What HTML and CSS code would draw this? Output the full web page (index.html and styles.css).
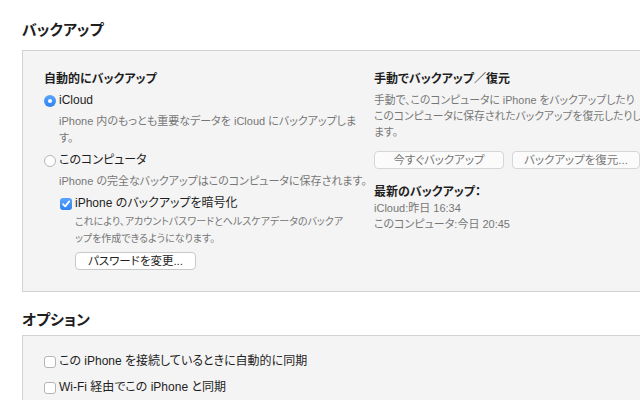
FILE: index.html
```html
<!DOCTYPE html>
<html>
  <head>
    <meta charset="UTF-8" />
    <title>バックアップ</title>
    <link rel="stylesheet" href="styles.css">
  </head>

  <body>
    <h2 class="section-title">バックアップ</h2>
    <div class="panel backup-panel">
      <div class="col col-left">
        <div class="label-bold">自動的にバックアップ</div>
        <div class="option-row">
          <span class="radio checked"></span>
          <span>iCloud</span>
        </div>
        <p class="desc">iPhone 内のもっとも重要なデータを iCloud にバックアップしま<br />す。</p>
        <div class="option-row row-computer">
          <span class="radio"></span>
          <span>このコンピュータ</span>
        </div>
        <p class="desc desc-computer">iPhone の完全なバックアップはこのコンピュータに保存されます。</p>
        <div class="sub">
          <div class="option-row row-encrypt">
            <span class="checkbox checked">
              <svg viewBox="0 0 12 12" width="12" height="12">
                <path d="M3 6.2 L5.2 8.4 L9.2 3.4" fill="none" stroke="#fff" stroke-width="1.7" stroke-linecap="round" stroke-linejoin="round" />
              </svg>
            </span>
            <span>iPhone のバックアップを暗号化</span>
          </div>
          <p class="small">これにより、アカウントパスワードとヘルスケアデータのバックア<br />ップを作成できるようになります。</p>
          <button class="btn btn-password">パスワードを変更...</button>
        </div>
      </div>

      <div class="col col-right">
        <div class="label-bold">手動でバックアップ／復元</div>
        <p class="desc desc-manual">手動で、このコンピュータに iPhone をバックアップしたり<br />このコンピュータに保存されたバックアップを復元したりし<br />ます。</p>
        <div class="btn-row">
          <button class="btn btn-dim btn-now">今すぐバックアップ</button>
          <button class="btn btn-dim btn-restore">バックアップを復元...</button>
        </div>
        <div class="label-bold latest">最新のバックアップ：</div>
        <div class="desc latest-line">iCloud:昨日 16:34</div>
        <div class="desc latest-line">このコンピュータ:今日 20:45</div>
      </div>
    </div>

    <h2 class="section-title options-title">オプション</h2>
    <div class="panel options-panel">
      <div class="option-row">
        <span class="checkbox"></span>
        <span>この iPhone を接続しているときに自動的に同期</span>
      </div>
      <div class="option-row option-wifi">
        <span class="checkbox"></span>
        <span>Wi-Fi 経由でこの iPhone と同期</span>
      </div>
    </div>
  </body>
</html>
```

FILE: styles.css
```css
/* 全体 */
body {
  margin: 0;
  background-color: #fff;
  color: #222;
  font-family: "Liberation Sans", "Noto Sans CJK JP", sans-serif;
  font-size: 11px;
  font-feature-settings: "palt";
  white-space: nowrap;
  overflow: hidden;
}

p {
  margin: 0;
}

/* 見出し */
.section-title {
  margin: 0 0 0 22px;
  padding-top: 21px;
  height: 29px;
  font-size: 15px;
  line-height: 18px;
  font-weight: bold;
  color: #1e1e1e;
}

.options-title {
  padding-top: 19px;
  height: 24px;
}

/* パネル */
.panel {
  margin-left: 22px;
  background-color: #f4f4f4;
  border: 1px solid #d2d2d2;
  border-right: none;
}

.backup-panel {
  display: flex;
  height: 240px;
  padding-left: 21px;
}

.col-left {
  flex: none;
  width: 330px;
}

.col-right {
  flex: 1;
  min-width: 0;
}

.label-bold {
  font-weight: bold;
  font-size: 12px;
  line-height: 17px;
  margin-top: 20px;
  color: #1e1e1e;
}

.option-row {
  display: flex;
  align-items: center;
  height: 17px;
  line-height: 17px;
  font-size: 12px;
  color: #1e1e1e;
}

.option-row .radio,
.option-row .checkbox {
  margin-right: 3px;
}

.col-left .option-row {
  margin-top: 4px;
}

.desc {
  color: #777;
  font-size: 11px;
  line-height: 17px;
  padding-left: 15px;
  margin-top: 4px;
}

.col-left .row-computer {
  margin-top: 5px;
}

.desc-computer {
  margin-top: 4px;
}

.sub {
  padding-left: 16px;
}

.col-left .row-encrypt {
  margin-top: 5px;
}

.small {
  color: #777;
  font-size: 10px;
  line-height: 17px;
  padding-left: 15px;
  margin-top: 1px;
}

/* ラジオとチェックボックス */
.radio {
  display: inline-block;
  box-sizing: border-box;
  width: 12px;
  height: 12px;
  border-radius: 50%;
  border: 1px solid #b5b5b5;
  background-color: #fff;
  position: relative;
}

.radio.checked {
  border: none;
  background: linear-gradient(#5ba4fb, #2e83f2);
}

.radio.checked::after {
  content: "";
  position: absolute;
  left: 4px;
  top: 4px;
  width: 4px;
  height: 4px;
  border-radius: 50%;
  background-color: #fff;
}

.checkbox {
  display: inline-flex;
  box-sizing: border-box;
  width: 12px;
  height: 12px;
  border-radius: 3px;
  border: 1px solid #b5b5b5;
  background-color: #fff;
}

.checkbox.checked {
  border: none;
  background: linear-gradient(#5ba4fb, #2e83f2);
}

/* ボタン */
.btn {
  box-sizing: border-box;
  height: 18px;
  padding: 0;
  border: 1px solid #c9c9c9;
  border-radius: 4px;
  background-color: #fff;
  font-family: "Liberation Sans", "Noto Sans CJK JP", sans-serif;
  font-feature-settings: "palt";
  font-size: 11.5px;
  line-height: 16px;
  color: #222;
}

.btn-password {
  width: 121px;
  margin: 5px 0 0 15px;
}

.btn-dim {
  color: #777;
  background-color: #fbfbfb;
  border-color: #d6d6d6;
}

.desc-manual {
  padding-left: 0;
  font-size: 10.8px;
  line-height: 16px;
  margin-top: 4px;
}

.btn-row {
  display: flex;
  gap: 8px;
  margin-top: 11px;
}

.btn-now {
  width: 130px;
}

.btn-restore {
  width: 128px;
}

.latest {
  margin-top: 15px;
  line-height: 16px;
}

.latest-line {
  padding-left: 0;
  margin-top: 0;
  line-height: 16px;
}

.options-panel {
  height: 80px;
  padding: 17px 0 0 21px;
}

.option-wifi {
  margin-top: 9px;
}
```
